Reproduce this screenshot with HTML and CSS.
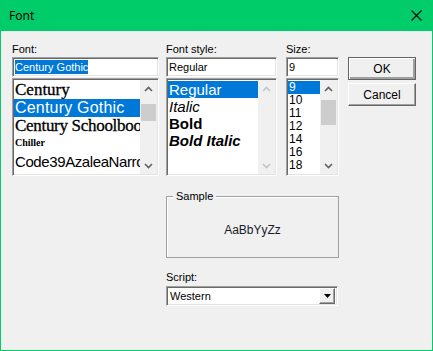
FILE: index.html
```html
<!DOCTYPE html>
<html lang="en">
<head>
    <meta charset="UTF-8">
    <title>Font</title>
    <link rel="stylesheet" href="styles.css">
</head>
<body>
    <div class="window">
        <div class="titlebar">
            <span class="title">Font</span>
            <svg class="close" width="11" height="11" viewBox="0 0 11 11">
                <path d="M0.5 0.5 L10.5 10.5 M10.5 0.5 L0.5 10.5" stroke="#000" stroke-width="1.1" fill="none"/>
            </svg>
        </div>

        <div class="dialog">
            <div class="col font-col">
                <div class="label">Font:</div>
                <div class="field sunken"><span class="sel">Century Gothic</span></div>
                <div class="list sunken">
                    <div class="items">
                        <div class="item f-century">Century</div>
                        <div class="item f-gothic active">Century Gothic</div>
                        <div class="item f-school">Century Schoolbook</div>
                        <div class="item f-chiller">Chiller</div>
                        <div class="item f-code">Code39AzaleaNarrow</div>
                    </div>
                    <div class="scrollbar">
                        <div class="arrow"><svg width="9" height="6" viewBox="0 0 9 6"><path d="M1 5 L4.5 1.5 L8 5" stroke="#606060" stroke-width="1.6" fill="none"/></svg></div>
                        <div class="track"><div class="thumb" style="margin-top:7px;height:17px"></div></div>
                        <div class="arrow"><svg width="9" height="6" viewBox="0 0 9 6"><path d="M1 1 L4.5 4.5 L8 1" stroke="#606060" stroke-width="1.6" fill="none"/></svg></div>
                    </div>
                </div>
            </div>

            <div class="mid">
                <div class="mid-top">
                    <div class="col style-col">
                        <div class="label">Font style:</div>
                        <div class="field sunken">Regular</div>
                        <div class="list sunken">
                            <div class="items">
                                <div class="item s-row active">Regular</div>
                                <div class="item s-row italic">Italic</div>
                                <div class="item s-row bold">Bold</div>
                                <div class="item s-row bold italic">Bold Italic</div>
                            </div>
                            <div class="scrollbar">
                                <div class="arrow"><svg width="9" height="6" viewBox="0 0 9 6"><path d="M1 5 L4.5 1.5 L8 5" stroke="#c4c4c4" stroke-width="1.6" fill="none"/></svg></div>
                                <div class="track"></div>
                                <div class="arrow"><svg width="9" height="6" viewBox="0 0 9 6"><path d="M1 1 L4.5 4.5 L8 1" stroke="#c4c4c4" stroke-width="1.6" fill="none"/></svg></div>
                            </div>
                        </div>
                    </div>

                    <div class="col size-col">
                        <div class="label">Size:</div>
                        <div class="field sunken">9</div>
                        <div class="list sunken">
                            <div class="items">
                                <div class="item z-row active">9</div>
                                <div class="item z-row">10</div>
                                <div class="item z-row">11</div>
                                <div class="item z-row">12</div>
                                <div class="item z-row">14</div>
                                <div class="item z-row">16</div>
                                <div class="item z-row">18</div>
                            </div>
                            <div class="scrollbar">
                                <div class="arrow"><svg width="9" height="6" viewBox="0 0 9 6"><path d="M1 5 L4.5 1.5 L8 5" stroke="#606060" stroke-width="1.6" fill="none"/></svg></div>
                                <div class="track"><div class="thumb" style="margin-top:3px;height:25px"></div></div>
                                <div class="arrow"><svg width="9" height="6" viewBox="0 0 9 6"><path d="M1 1 L4.5 4.5 L8 1" stroke="#606060" stroke-width="1.6" fill="none"/></svg></div>
                            </div>
                        </div>
                    </div>
                </div>

                <div class="group">
                    <span class="group-label">Sample</span>
                    <div class="sample">AaBbYyZz</div>
                </div>

                <div class="label script-label">Script:</div>
                <div class="combo sunken">
                    <span class="combo-text">Western</span>
                    <div class="combo-btn">
                        <svg width="7" height="4" viewBox="0 0 7 4"><path d="M0 0 H7 L3.5 4 Z" fill="#000"/></svg>
                    </div>
                </div>
            </div>

            <div class="buttons">
                <div class="btn default">OK</div>
                <div class="btn">Cancel</div>
            </div>
        </div>
    </div>
</body>
</html>
```

FILE: styles.css
```css
* {
    margin: 0;
    padding: 0;
    box-sizing: border-box;
}

body {
    font-family: 'Liberation Sans', Arial, sans-serif;
    font-size: 11px;
    color: #000;
    background: #f0f0f0;
}

.window {
    width: 433px;
    height: 351px;
    border: 1px solid #00cc6a;
    border-top: 0;
    background: #f0f0f0;
}

.titlebar {
    height: 31px;
    background: #00cc6a;
    display: flex;
    align-items: center;
    justify-content: space-between;
    padding: 0 10px 0 8px;
}

.title {
    font-family: 'Noto Sans', sans-serif;
    font-size: 12px;
    margin-top: -1px;
}

.close {
    display: block;
}

.dialog {
    display: flex;
    padding: 12px 0 0 11px;
}

.col {
    display: flex;
    flex-direction: column;
}

.label {
    height: 14px;
    line-height: 13px;
}

.sunken {
    border: 1px solid;
    border-color: #a0a0a0 #fff #fff #a0a0a0;
    box-shadow: inset 1px 1px #696969, inset -1px -1px #e3e3e3;
    padding: 1px;
    background: #fff;
}

.field {
    height: 20px;
    line-height: 16px;
    padding-left: 2px;
    white-space: nowrap;
    overflow: hidden;
}

.sel {
    background: #0078d7;
    color: #fff;
    display: inline-block;
    line-height: 14px;
    margin-top: 1px;
}

.list {
    margin-top: 1px;
    height: 98px;
    display: flex;
    overflow: hidden;
}

.items {
    flex: 1;
    min-width: 0;
    overflow: hidden;
    padding-top: 1px;
}

.item {
    white-space: nowrap;
    overflow: hidden;
}

.item.active {
    background: #0078d7;
    color: #fff;
}

.scrollbar {
    width: 17px;
    flex: none;
    display: flex;
    flex-direction: column;
    background: #f0f0f0;
}

.arrow {
    height: 17px;
    display: flex;
    align-items: center;
    justify-content: center;
}

.track {
    flex: 1;
    display: flex;
    flex-direction: column;
    align-items: center;
}

.thumb {
    width: 15px;
    background: #cdcdcd;
}

/* font list */
.font-col {
    width: 147px;
}

.font-col .item {
    height: 18px;
    line-height: 18px;
    padding-left: 1px;
}

.f-century,
.f-school {
    font-family: 'Liberation Serif', 'Times New Roman', serif;
    font-size: 17px;
    -webkit-text-stroke: 0.3px #000;
}

.f-school {
    letter-spacing: -0.3px;
}

.f-gothic {
    font-size: 16px;
    letter-spacing: 0.2px;
}

.f-code {
    font-size: 15px;
    letter-spacing: -0.4px;
}

.f-chiller {
    font-family: 'Liberation Serif', serif;
    font-size: 10px;
    font-weight: bold;
    line-height: 16px !important;
}

/* style / size */
.mid {
    width: 173px;
    margin-left: 7px;
    display: flex;
    flex-direction: column;
}

.mid-top {
    display: flex;
    gap: 9px;
}

.style-col {
    width: 111px;
}

.s-row {
    height: 17px;
    line-height: 17px;
    font-size: 15px;
    padding-left: 1px;
}

.bold {
    font-weight: bold;
}

.italic {
    font-style: italic;
}

.size-col {
    width: 53px;
}

.z-row {
    height: 13px;
    line-height: 13px;
    font-size: 12px;
    padding-left: 1px;
}

.group {
    position: relative;
    margin-top: 20px;
    height: 62px;
    border: 1px solid #a0a0a0;
    box-shadow: inset 1px 1px #fff;
    display: flex;
    align-items: center;
    justify-content: center;
    padding-top: 6px;
}

.group-label {
    position: absolute;
    left: 6px;
    top: -7px;
    padding: 0 3px;
    background: #f0f0f0;
    line-height: 13px;
}

.sample {
    font-size: 12px;
    color: #1a1a2a;
}

.script-label {
    margin-top: 13px;
    height: 15px;
}

.combo {
    height: 20px;
    width: 172px;
    display: flex;
    align-items: center;
    justify-content: space-between;
}

.combo-text {
    padding-left: 2px;
}

.combo-btn {
    width: 16px;
    height: 16px;
    background: #f0f0f0;
    border: 1px solid;
    border-color: #fff #696969 #696969 #fff;
    box-shadow: inset -1px -1px #a0a0a0;
    display: flex;
    align-items: center;
    justify-content: center;
    margin-right: 1px;
}

/* buttons */
.buttons {
    margin-left: 9px;
    padding-top: 14px;
    display: flex;
    flex-direction: column;
    gap: 3px;
}

.btn {
    width: 68px;
    height: 23px;
    background: #f0f0f0;
    border: 1px solid;
    border-color: #fff #696969 #696969 #fff;
    box-shadow: inset -1px -1px #a0a0a0;
    display: flex;
    align-items: center;
    justify-content: center;
    font-size: 12px;
}

.btn.default {
    border: 1px solid #646464;
    box-shadow: inset 1px 1px #fff, inset -2px -2px #a0a0a0;
}
```
